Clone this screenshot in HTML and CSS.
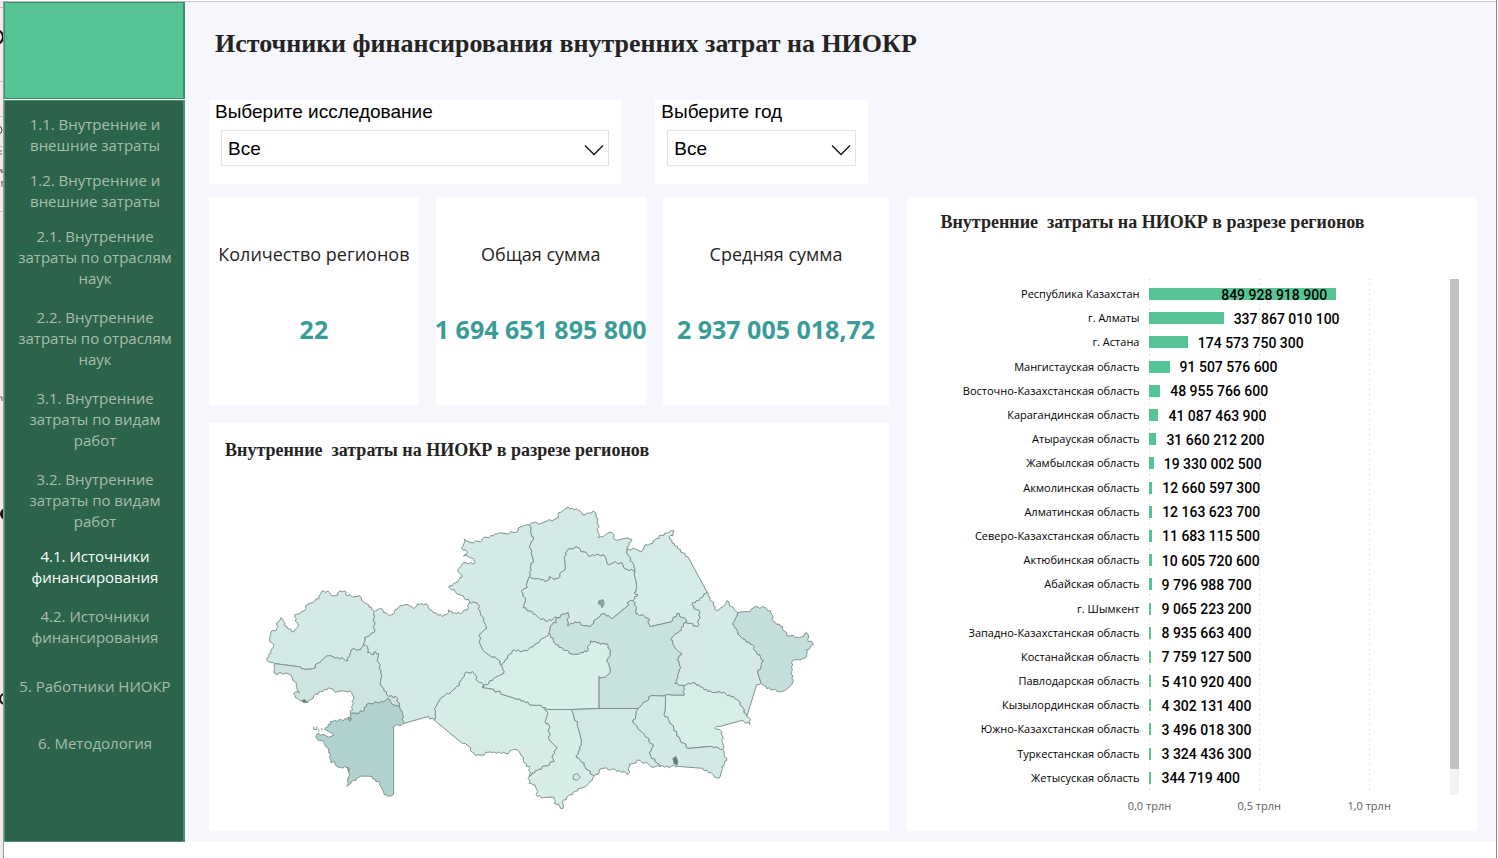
FILE: index.html
```html
<!DOCTYPE html>
<html lang="ru">
<head>
<meta charset="utf-8">
<meta name="viewport" content="width=device-width, initial-scale=1">
<title>Источники финансирования внутренних затрат на НИОКР</title>
<link rel="stylesheet" href="styles.css">
</head>
<body>
<div class="page">
  <div class="edge" aria-hidden="true">
    <svg class="edge-art" width="4" height="840" viewBox="0 0 4 840">
      <path d="M0 6.500H4M0 80.500H4M0 115.500H4M0 145.500H4M0 210.500H4" stroke="#c4c4c4"/>
      <circle cx="-4" cy="36" r="7" fill="none" stroke="#111" stroke-width="2"/>
      <circle cx="-2" cy="129" r="4" fill="none" stroke="#444"/>
      <path d="M0 150h2M0 153h2M0 168l2 4v-4M2 180v6M1 181h2M0 396h2v4" stroke="#666" fill="none"/>
      <circle cx="6" cy="513" r="6" fill="#111"/>
      <circle cx="5" cy="698" r="5" fill="none" stroke="#111" stroke-width="2"/>
    </svg>
  </div>
  <aside class="sidebar">
    <div class="brand"></div>
    <nav class="nav" aria-label="Разделы">
      <a href="#p11">1.1. Внутренние и внешние затраты</a>
      <a href="#p12">1.2. Внутренние и внешние затраты</a>
      <a href="#p21">2.1. Внутренние затраты по отраслям наук</a>
      <a class="space-m" href="#p22">2.2. Внутренние затраты по отраслям наук</a>
      <a class="space-m" href="#p31">3.1. Внутренние затраты по видам работ</a>
      <a class="space-m" href="#p32">3.2. Внутренние затраты по видам работ</a>
      <a class="current" aria-current="page" href="#p41">4.1. Источники финансирования</a>
      <a class="space-m" href="#p42">4.2. Источники финансирования</a>
      <a class="space-l" href="#p5">5. Работники НИОКР</a>
      <a class="space-xl" href="#p6">6. Методология</a>
    </nav>
  </aside>
  <main class="board">
    <h1 class="title">Источники финансирования внутренних затрат на НИОКР</h1>
    <div class="filters">
      <div class="filter">
        <label for="study">Выберите исследование</label>
        <div class="pick">
          <select id="study"><option>Все</option></select>
          <svg class="chevron" width="20" height="12" viewBox="0 0 20 12"><path d="M1 1.500L10 10.500L19 1.500" fill="none" stroke="#111" stroke-width="1.300"/></svg>
        </div>
      </div>
      <div class="filter">
        <label for="year">Выберите год</label>
        <div class="pick">
          <select id="year"><option>Все</option></select>
          <svg class="chevron" width="20" height="12" viewBox="0 0 20 12"><path d="M1 1.500L10 10.500L19 1.500" fill="none" stroke="#111" stroke-width="1.300"/></svg>
        </div>
      </div>
    </div>
    <div class="left">
      <section class="kpis">
        <div class="kpi"><h2>Количество регионов</h2><p>22</p></div>
        <div class="kpi"><h2>Общая сумма</h2><p>1 694 651 895 800</p></div>
        <div class="kpi"><h2>Средняя сумма</h2><p>2 937 005 018,72</p></div>
      </section>
      <section class="card map-card">
        <h2 class="card-title">Внутренние  затраты на НИОКР в разрезе регионов</h2>
        <svg class="map" id="map" viewBox="208 490 682 330" role="img" aria-label="Карта регионов Казахстана"></svg>
      </section>
    </div>
    <section class="card chart-card">
      <h2 class="card-title">Внутренние  затраты на НИОКР в разрезе регионов</h2>
      <div class="chart">
        <ul class="labels" id="labels"></ul>
        <div class="plot">
          <div class="bars" id="bars"></div>
          <div class="axis"><span>0,0 трлн</span><span>0,5 трлн</span><span>1,0 трлн</span></div>
        </div>
        <div class="scroll"><div class="thumb"></div></div>
      </div>
    </section>
  </main>
</div>
<script src="app.js"></script>
</body>
</html>
```
FILE: styles.css
```css
* { box-sizing: border-box; }
body { margin: 0; background: #fff; font-family: "Open Sans", "Noto Sans", sans-serif; color: #252423; }
h1, h2, p, ul { margin: 0; padding: 0; }
.page { min-height: 100vh; display: grid; grid-template-columns: 4px 181px 1fr; padding-top: 1px; border-right: 1px solid #8a8a8a; margin-right: 1px; }
.edge { background: #ececec; border-right: 1px solid #9a9a9a; overflow: hidden; }
.edge-art { display: block; }
.sidebar { display: flex; flex-direction: column; margin-bottom: 16px; border-top: 1px solid #b9b9b9; }
.brand { height: 97px; background: #56c596; border: 1px solid #3f8f6d; border-right-width: 2px; }
.nav { flex: 1; margin-top: 1px; padding: 13px 10px 0 12px; display: flex; flex-direction: column; background: #2b644a; border: 1px solid #4a9171; border-right-width: 2px; text-align: center; }
.nav a { margin-top: 14px; font-size: 15px; line-height: 21px; color: #a9bcae; text-decoration: none; }
.nav a:first-child { margin-top: 0; }
.nav .space-m { margin-top: 18px; }
.nav .space-l { margin-top: 28px; }
.nav .space-xl { margin-top: 36px; }
.nav .current { color: #fff; }

.board { background: #f6f7fc; border-top: 1px solid #c8c8cc; margin-bottom: 16px; padding: 0 19px 11px 24px; display: grid; grid-template-columns: 681fr 570fr; grid-template-rows: 98px 84px 1fr; column-gap: 18px; }
.title { grid-column: 1 / -1; padding: 28px 0 0 6px; font: bold 26px/28px "Liberation Serif", serif; }
.filters { grid-column: 1; display: grid; grid-template-columns: 412fr 213fr; gap: 34px; padding-right: 21px; }
.filter { background: #fff; padding: 1px 12px 18px; }
.filter label { display: block; margin-left: -6px; font: 19px/22px "Liberation Sans", sans-serif; color: #000; }
.pick { display: grid; margin-top: 7px; align-items: center; }
.pick select { grid-area: 1 / 1; width: 100%; height: 36px; padding: 2px 6px 0; appearance: none; background: #fff; border: 1px solid #e3e3e3; border-radius: 0; font: 19px/22px "Liberation Sans", sans-serif; color: #000; }
.chevron { grid-area: 1 / 1; justify-self: end; margin: 4px 5px 0 0; pointer-events: none; }

.left { grid-column: 1; margin-top: 13px; display: flex; flex-direction: column; gap: 18px; }
.kpis { display: grid; grid-template-columns: 210fr 210fr 227fr; gap: 17px; height: 208px; }
.kpi { min-width: 0; background: #fff; padding-top: 44px; display: flex; flex-direction: column; align-items: center; gap: 49px; }
.kpi h2 { font-size: 18px; line-height: 26px; font-weight: 400; white-space: nowrap; }
.kpi p { font-size: 25px; line-height: 26px; font-weight: 700; color: #3a9c97; white-space: nowrap; }
.card { background: #fff; }
.card-title { font: bold 18px/20px "Liberation Serif", serif; white-space: pre-wrap; }
.map-card { flex: 1; padding-top: 17px; }
.map-card .card-title { padding-left: 16px; }
.map { display: block; width: 100%; margin-top: 30px; }
.map .region { stroke: #7d918d; stroke-width: 1; stroke-linejoin: round; }

.chart-card { grid-column: 2; margin-top: 13px; padding: 15px 18px 12px 0; display: flex; flex-direction: column; }
.chart-card .card-title { padding-left: 33px; }
.chart { flex: 1; margin-top: 47px; display: grid; grid-template-columns: 232px 1fr 9px; column-gap: 10px; }
.labels { list-style: none; display: flex; flex-direction: column; padding: 3px 0 29px; }
.labels li { flex: 1; display: flex; align-items: center; justify-content: flex-end; font-size: 11px; line-height: 16px; color: #000; white-space: nowrap; }
.plot { display: flex; flex-direction: column; }
.bars { flex: 1; display: flex; flex-direction: column; padding-top: 3px; position: relative; }
.grid-line { position: absolute; top: 0; bottom: -4px; width: 1px; background: repeating-linear-gradient(#cfcfcf 0 1px, transparent 1px 5px); }
.row { flex: 1; display: flex; align-items: center; gap: 10px; position: relative; }
.bar { height: 12px; min-width: 2px; background: #56c596; }
.value { font: 500 14px/16px Roboto, sans-serif; color: #000; white-space: nowrap; padding-top: 1px; }
.bar .value { display: block; text-align: right; padding: 0 9px 0 0; line-height: 15px; }
.axis { display: flex; width: 113.400%; margin-left: -18.900%; padding-top: 8px; height: 29px; font-size: 11px; line-height: 16px; color: #605e5c; }
.axis span { flex: 1; text-align: center; }
.scroll { background: #f3f3f3; margin-bottom: 24px; }
.thumb { height: 95%; background: #c2c2c2; }
```
FILE: app.js
```js
const SVG = 'http://www.w3.org/2000/svg';

const data = [
  ['Республика Казахстан', 849928918900], ['г. Алматы', 337867010100], ['г. Астана', 174573750300],
  ['Мангистауская область', 91507576600], ['Восточно-Казахстанская область', 48955766600],
  ['Карагандинская область', 41087463900], ['Атырауская область', 31660212200],
  ['Жамбылская область', 19330002500], ['Акмолинская область', 12660597300],
  ['Алматинская область', 12163623700], ['Северо-Казахстанская область', 11683115500],
  ['Актюбинская область', 10605720600], ['Абайская область', 9796988700], ['г. Шымкент', 9065223200],
  ['Западно-Казахстанская область', 8935663400], ['Костанайская область', 7759127500],
  ['Павлодарская область', 5410920400], ['Кызылординская область', 4302131400],
  ['Южно-Казахстанская область', 3496018300], ['Туркестанская область', 3324436300],
  ['Жетысуская область', 344719400]
];
const AXIS_MAX = 1.3227e12;
const labels = document.getElementById('labels');
const bars = document.getElementById('bars');

[0, 0.5e12, 1e12].forEach(v => {
  const line = document.createElement('div');
  line.className = 'grid-line';
  line.style.left = (v / AXIS_MAX * 100) + '%';
  bars.append(line);
});
data.forEach(([name, v], i) => {
  const li = document.createElement('li');
  li.textContent = name;
  labels.append(li);
  const row = document.createElement('div');
  row.className = 'row';
  const bar = document.createElement('div');
  bar.className = 'bar';
  bar.style.width = (v / AXIS_MAX * 100) + '%';
  const value = document.createElement('span');
  value.className = 'value';
  value.textContent = String(v).replace(/\B(?=(\d{3})+$)/g, ' ');
  row.append(bar);
  (i === 0 ? bar : row).append(value);
  bars.append(row);
});

// Shared borders, so that neighbouring regions meet exactly. "~name" walks a border backwards.
const arcs = {
  wkTop: '266,661 270,651 273,645 269,642 270,633 276,629 277,622 280,618 283,622 287,629 291,632 294,630 297,627 296,623 294,615 299,614 305,609 305,606 312,603 318,599 320,594 323,591 329,593 331,596 335,596 337,593 342,592 344,591 347,596 359,596 363,602 368,605 373,611 373,615',
  wkAkt: '373,615 374,625 373,633 369,636 364,638 363,645',
  wkAty: '363,645 360,650 351,650 349,655 347,661 337,658 328,656 319,663 312,669 305,670 297,667 274,664',
  wkWest: '274,664 266,661',
  atyCoast: '274,664 273,672 277,675 278,673 287,674 292,681 294,682 296,688 299,693 293,694 297,699 302,702 307,703 310,700 313,696 320,692 330,689 335,693 345,692 351,693 353,700 351,708 350,714',
  atyMan: '350,714 362,712 366,705 385,701 387,699 392,705 399,706',
  atyAkt: '363,645 367,647 367,653 373,655 375,652 378,654 378,663 381,675 381,687 386,695 397,699 399,706',
  manAkt: '399,706 402,713 403,724',
  manCoast: '403,724 393,727 393,795 387,797 383,793 379,784 369,777 358,778 351,782 346,787 347,782 349,775 348,768 338,768 334,762 330,763 330,755 326,748 323,742 316,739 316,735 322,735 330,737 333,736 328,732 324,730 330,722 340,720 349,719 350,714',
  aktTop: '373,615 375,611 381,609 383,613 389,616 394,613 397,609 402,606 409,606 413,609 417,604 423,605 426,604 428,608 433,613 442,617 446,615 448,610 452,614 462,613 467,610 469,602',
  aktKos: '469,602 473,602 478,605 480,613 483,621 486,629 480,634 479,643 483,651 490,656 498,660 501,666',
  aktUly: '501,666 504,672 492,681 482,688',
  aktKyz: '482,688 483,685 479,683 472,672 464,674 459,686 452,691 443,697 434,709 434,721',
  aktSouth: '434,721 428,717 403,724',
  kyzSouth: '434,721 462,744 465,744 475,756 492,753 508,754 516,750 523,758 526,767 529,767 529,777',
  kyzTur: '529,777 537,771 554,762 552,758 557,748 549,740 549,726 545,722 547,712 545,708',
  kyzUly: '482,688 497,692 515,699 525,703 545,708',
  ulyTur: '545,708 547,710 571,710', ulyZha: '571,710 599,709',
  turZha: '571,710 577,725 581,744 576,758 584,764 586,770 594,777',
  turSouth: '594,777 590,782 583,788 575,792 568,797 562,802 563,809 554,804 554,798 537,797 535,786 529,784 529,777',
  ulyKos: '501,666 505,660 512,651 522,652 533,647 540,640 549,633',
  ulyKar: '549,633 554,643 563,650 574,655 587,652 590,641 597,643 607,644 610,653 607,662 610,673 605,678 599,677 599,709',
  kosTop: '469,602 463,596 455,592 448,587 455,583 462,577 457,570 463,563 475,563 473,559 463,556 467,552 461,548 464,539 468,542 480,542 482,539 497,534 517,532 518,528 529,525',
  kosSko: '529,525 530,532 533,540 529,547 531,554 533,560 530,568 529,577',
  kosAkm: '529,577 527,588 521,592 525,598 523,608 533,614 545,621 557,618',
  kosKar: '557,618 556,623 552,625 549,633',
  skoTop: '529,525 547,521 558,518 558,513 568,507 580,511 585,515 593,511 596,515 598,525 598,538 605,535 612,533 615,540 627,538 632,540 627,549',
  skoPav: '627,549 628,555 632,562 635,572',
  skoAkm: '529,577 536,579 547,581 549,577 556,579 565,570 565,553 570,549 578,548 583,552 588,556 603,555 607,564 622,563 625,569 635,572',
  akmPav: '635,572 636,590 634,593 638,595 633,601',
  akmKar: '633,601 627,603 629,605 612,619 603,614 598,618 590,627 577,623 567,626 568,613 557,618',
  pavTop: '627,549 637,550 641,552 644,547 650,544 655,540 665,533 674,531 673,536 669,537 672,543 688,557 707,592',
  pavAba: '707,592 702,598 692,605 700,613 698,627 686,623',
  pavKar: '686,623 684,618 677,614 672,622 650,627 648,623 650,620 644,616 636,614 635,603 633,601',
  karAba: '686,623 678,633 671,640 675,648 682,654 677,660 681,668 678,678 675,684 684,686',
  karZhe: '684,686 684,696 665,696', karAlm: '665,696 653,696 643,703 638,709', karZha: '638,709 599,709',
  abaZhe: '684,686 693,683 703,688 712,693 720,692 737,700 743,708 747,717',
  abaTop: '707,592 717,611 723,607 727,601 732,607 737,612 738,613',
  abaVko: '738,613 733,624 738,632 743,639 753,645 755,651 764,661 758,673 761,684',
  abaEast: '761,684 757,685 747,717',
  vkoEdge: '738,613 750,612 758,607 767,609 772,615 774,622 783,627 787,636 800,638 807,633 808,640 814,645 807,650 807,657 803,659 793,661 792,672 793,683 782,692 767,689 761,684',
  zheEast: '747,717 751,720 750,725 742,721 720,727 715,729 722,732 723,750',
  zheAlm: '723,750 710,747 688,749 680,740 672,725 664,715 665,696',
  almSouth: '723,750 727,761 722,767 719,779 713,775 703,769 678,767 660,767',
  almZha: '638,709 636,715 633,723 637,727 645,737 653,745 650,755 655,762 660,767',
  zhaSouth: '660,767 653,768 640,761 629,765 628,775 615,770 602,769 594,777'
};
const regions = [
  ['#d5eae6', 'wkTop wkAkt wkAty wkWest'],
  ['#cde4e0', '~wkAty atyAkt ~atyMan ~atyCoast'],
  ['#b1d2cf', 'atyMan manAkt manCoast'],
  ['#d5e9e6', 'aktTop aktKos aktUly aktKyz aktSouth ~manAkt ~atyAkt ~wkAkt'],
  ['#d7ebe7', '~aktKyz kyzUly ~kyzTur ~kyzSouth'],
  ['#d9eee8', 'aktUly kyzUly ulyTur ulyZha ~ulyKar ~ulyKos'],
  ['#d5eae6', 'kosTop kosSko kosAkm kosKar ~ulyKos ~aktKos'],
  ['#d5eae6', 'skoTop skoPav ~skoAkm ~kosSko'],
  ['#d6eae7', 'skoAkm akmPav akmKar ~kosAkm'],
  ['#d7ebe8', 'pavTop pavAba pavKar ~akmPav ~skoPav'],
  ['#c8e2dd', 'kosKar ulyKar ~karZha ~karAlm ~karZhe ~karAba pavKar akmKar'],
  ['#d5eae6', 'abaTop abaVko abaEast ~abaZhe ~karAba ~pavAba'],
  ['#c4dfdb', 'vkoEdge ~abaVko'],
  ['#d9eee9', 'abaZhe zheEast zheAlm ~karZhe'],
  ['#d3e9e5', 'karAlm almZha ~almSouth zheAlm'],
  ['#d2e8e4', '~ulyZha turZha ~zhaSouth ~almZha karZha'],
  ['#d8ede8', 'ulyTur turZha turSouth kyzTur']
];

// Breaks a short edge into small irregular steps; long edges are surveyed straight lines.
function roughen(points) {
  const out = [points[0]];
  for (let i = 1; i < points.length; i++) {
    const [x1, y1] = points[i - 1], [x2, y2] = points[i];
    const len = Math.hypot(x2 - x1, y2 - y1);
    const n = len > 22 ? 1 : Math.round(len / 2.2);
    for (let k = 1; k < n; k++) {
      const t = k / n;
      const s = Math.sin((x1 * 12.9 + y1 * 78.2 + k * 37.7)) * 43758.5;
      const d = (s - Math.floor(s) - 0.5) * 2.8;
      out.push([x1 + (x2 - x1) * t - (y2 - y1) / len * d, y1 + (y2 - y1) * t + (x2 - x1) / len * d]);
    }
    out.push([x2, y2]);
  }
  return out;
}
const lines = {};
for (const key in arcs) lines[key] = roughen(arcs[key].split(' ').map(p => p.split(',').map(Number)));

// Chains borders end to end, reversing any that run the other way.
function chain(names) {
  const rest = names.split(' ').map(n => lines[n.replace('~', '')]);
  const same = (a, b) => a[0] === b[0] && a[1] === b[1];
  let path = rest.shift().slice();
  while (rest.length) {
    const end = path[path.length - 1];
    const i = rest.findIndex(l => same(l[0], end) || same(l[l.length - 1], end));
    if (i < 0) break;
    const l = rest.splice(i, 1)[0];
    path = path.concat(same(l[0], end) ? l : l.slice().reverse());
  }
  return path;
}
const map = document.getElementById('map');
function draw(d, fill) {
  const p = document.createElementNS(SVG, 'path');
  p.setAttribute('class', 'region');
  p.setAttribute('d', d);
  p.setAttribute('fill', fill);
  map.append(p);
}
regions.forEach(([fill, names]) =>
  draw('M' + chain(names).map(p => p[0].toFixed(1) + ' ' + p[1].toFixed(1)).join('L') + 'Z', fill));
draw('M599 601L603 600L604 604L602 608L601 605L598 604Z', '#82aaa4');
draw('M573 776L577 774L580 778L577 781L573 780Z', '#d3e9e5');
draw('M673 759L676 757L678 762L677 766L674 764Z', '#4e7f7c');
draw('M301 701L304 700L306 702L303 703Z', '#59706d');
draw('M313 727v3h3v-3M318 730v2M320 729l2 1', 'none');
draw('M347 718l4 1l-2 3ZM347 769l2 1l-1 2Z', '#8fb5b1');
```
